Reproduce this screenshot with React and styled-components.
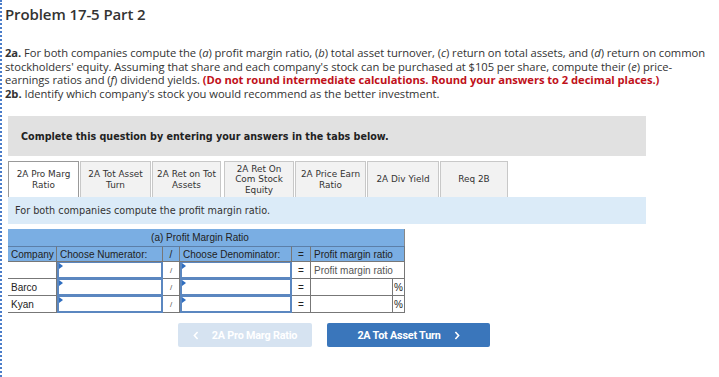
import React from "react";
import styled, { createGlobalStyle } from "styled-components";

const Global = createGlobalStyle`
  html, body { margin: 0; padding: 0; background: #fff; }
  body { font-family: "Open Sans", "Liberation Sans", sans-serif; color: #333; }
`;

const Page = styled.div`
  width: 719px;
  height: 377px;
  box-sizing: border-box;
  border-left: 2px dotted #4a7cc9;
  padding: 4px 0 0 3px;
  overflow: hidden;
`;

const Title = styled.h1`
  margin: 0;
  font-family: "Open Sans", sans-serif;
  font-weight: 600;
  font-size: 15px;
  line-height: 20px;
  color: #333;
  letter-spacing: -0.1px;
`;

const Para = styled.p`
  margin: 22px 0 0 0;
  width: 710px;
  font-size: 11.2px;
  line-height: 13.5px;
  color: #333;
  letter-spacing: -0.05px;
  b { font-weight: 700; }
  em { font-style: italic; }
`;

const Red = styled.b`
  color: #c0111a;
`;

const Work = styled.div`
  margin: 16px 0 0 3px;
  width: 638px;
`;

const Instr = styled.div`
  background: #e1e1e1;
  height: 40px;
  display: flex;
  align-items: center;
  padding-left: 13px;
  font-family: "DejaVu Sans", Verdana, sans-serif;
  font-weight: 700;
  font-size: 9.6px;
  color: #222;
`;

const Tabs = styled.div`
  display: flex;
  margin-top: 5px;
  gap: 1px;
`;

const Tab = styled.div`
  width: ${p => p.$w}px;
  height: 36px;
  box-sizing: border-box;
  border: 1px solid ${p => (p.$active ? "#999" : "#c8c8c8")};
  border-bottom: none;
  background: ${p => (p.$active ? "#fff" : "#f2f2f2")};
  display: flex;
  align-items: center;
  justify-content: center;
  text-align: center;
  font-family: "DejaVu Sans", Verdana, sans-serif;
  font-size: 8.9px;
  line-height: 10.5px;
  color: #333;
  margin-right: ${p => p.$mr || 0}px;
`;

const Strip = styled.div`
  background: #dbebf8;
  height: 27px;
  display: flex;
  align-items: center;
  padding-left: 7px;
  font-family: "DejaVu Sans", Verdana, sans-serif;
  font-size: 9.7px;
  color: #333;
`;

const Table = styled.div`
  margin-top: 5px;
  width: 398px;
  display: grid;
  grid-template-columns: 49px 106px 17px 112px 19px 82px 12px;
  font-family: "Liberation Sans", Arial, sans-serif;
  font-size: 10px;
  color: #222;
`;

const Banner = styled.div`
  grid-column: 1 / -1;
  height: 17px;
  background: #7aaee3;
  display: flex;
  align-items: center;
  justify-content: center;
  border-right: 1px solid #888;
  padding-right: 12px;
`;

const Head = styled.div`
  height: 16px;
  background: #7aaee3;
  display: flex;
  align-items: center;
  justify-content: ${p => (p.$center ? "center" : "flex-start")};
  padding-left: ${p => (p.$center ? 0 : 3)}px;
  border-top: 1px solid #5c7fa8;
  border-bottom: 1px solid #777;
  border-right: 1px solid #777;
  grid-column: span ${p => p.$span || 1};
  box-sizing: border-box;
  white-space: nowrap;
  overflow: hidden;
`;

const Cell = styled.div`
  height: 17px;
  box-sizing: border-box;
  border-bottom: 1px solid #777;
  border-right: 1px solid #777;
  display: flex;
  align-items: center;
  justify-content: ${p => (p.$center ? "center" : p.$end ? "flex-end" : "flex-start")};
  padding: 0 ${p => (p.$end ? 1 : 3)}px;
  grid-column: span ${p => p.$span || 1};
  color: ${p => (p.$muted ? "#555" : "#222")};
  white-space: nowrap;
`;

const Slash = styled(Cell)`
  color: #555;
  font-size: 8px;
`;

const InputCell = styled.div`
  height: 17px;
  box-sizing: border-box;
  border: 2px solid #5b87c0;
  border-top-width: 1px;
  background: #fff;
  position: relative;
`;

const Marker = styled.span`
  position: absolute;
  top: 0;
  left: 0;
  width: 0;
  height: 0;
  border-top: 3px solid transparent;
  border-bottom: 3px solid transparent;
  border-left: 4px solid #2f6ec0;
`;

const PlainInput = styled.div`
  height: 17px;
  box-sizing: border-box;
  border-bottom: 1px solid #777;
  border-right: 1px solid #777;
  background: #fff;
`;

const Nav = styled.div`
  display: flex;
  gap: 15px;
  margin: 10px 0 0 170px;
`;

const NavBtn = styled.div`
  width: ${p => p.$w}px;
  height: 24px;
  border-radius: 2px;
  background: ${p => (p.$disabled ? "#d6e3f1" : "#3a76bb")};
  color: #fff;
  display: flex;
  align-items: center;
  justify-content: center;
  gap: 13px;
  font-family: "Roboto", "Liberation Sans", sans-serif;
  font-weight: 700;
  font-size: 10.8px;
  letter-spacing: -0.2px;
`;

const Chev = ({ dir }) => (
  <svg width="6" height="9" viewBox="0 0 6 9">
    <path
      d={dir === "left" ? "M4.6 1 L1.4 4.5 L4.6 8" : "M1.4 1 L4.6 4.5 L1.4 8"}
      fill="none"
      stroke="#fff"
      strokeWidth="1.6"
    />
  </svg>
);

const tabs = [
  { t: ["2A Pro Marg", "Ratio"], w: 71, active: true },
  { t: ["2A Tot Asset", "Turn"], w: 71 },
  { t: ["2A Ret on Tot", "Assets"], w: 69, mr: 2 },
  { t: ["2A Ret On", "Com Stock", "Equity"], w: 70 },
  { t: ["2A Price Earn", "Ratio"], w: 71 },
  { t: ["2A Div Yield"], w: 72 },
  { t: ["Req 2B"], w: 68 },
];

const Input = () => (
  <InputCell>
    <Marker />
  </InputCell>
);

export default function App() {
  return (
    <Page>
      <Global />
      <Title>Problem 17-5 Part 2</Title>
      <Para>
        <b>2a.</b> For both companies compute the (<em>a</em>) profit margin ratio, (<em>b</em>) total asset
        turnover, (<em>c</em>) return on total assets, and (<em>d</em>) return on common stockholders' equity.
        Assuming that share and each company's stock can be purchased at $105 per share, compute their (
        <em>e</em>) price-earnings ratios and (<em>f</em>) dividend yields.{" "}
        <Red>(Do not round intermediate calculations. Round your answers to 2 decimal places.)</Red>
        <br />
        <b>2b.</b> Identify which company's stock you would recommend as the better investment.
      </Para>
      <Work>
        <Instr>Complete this question by entering your answers in the tabs below.</Instr>
        <Tabs>
          {tabs.map((x, i) => (
            <Tab key={i} $w={x.w} $active={x.active} $mr={x.mr}>
              <div>
                {x.t.map((l, j) => (
                  <div key={j}>{l}</div>
                ))}
              </div>
            </Tab>
          ))}
        </Tabs>
        <Strip>For both companies compute the profit margin ratio.</Strip>
        <Table>
          <Banner>(a) Profit Margin Ratio</Banner>
          <Head>Company</Head>
          <Head>Choose Numerator:</Head>
          <Head $center>/</Head>
          <Head>Choose Denominator:</Head>
          <Head $center>=</Head>
          <Head $span={2}>Profit margin ratio</Head>

          <Cell />
          <Input />
          <Slash $center>/</Slash>
          <Input />
          <Cell $center>=</Cell>
          <Cell $span={2} $muted>Profit margin ratio</Cell>

          <Cell>Barco</Cell>
          <Input />
          <Slash $center>/</Slash>
          <Input />
          <Cell $center>=</Cell>
          <PlainInput />
          <Cell $end>%</Cell>

          <Cell>Kyan</Cell>
          <Input />
          <Slash $center>/</Slash>
          <Input />
          <Cell $center>=</Cell>
          <PlainInput />
          <Cell $end>%</Cell>
        </Table>
        <Nav>
          <NavBtn $w={134} $disabled>
            <Chev dir="left" />
            <span>2A Pro Marg Ratio</span>
          </NavBtn>
          <NavBtn $w={163}>
            <span>2A Tot Asset Turn</span>
            <Chev dir="right" />
          </NavBtn>
        </Nav>
      </Work>
    </Page>
  );
}
